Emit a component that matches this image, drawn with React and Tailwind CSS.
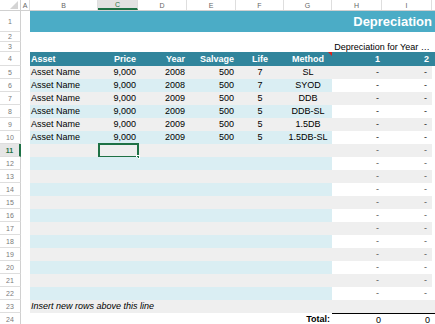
import React from 'react';

// column widths, in order A..I, then a filler
const W = {
  A: 'w-[9px]',
  B: 'w-[68px]',
  C: 'w-[40px]',
  D: 'w-[49px]',
  E: 'w-[49px]',
  F: 'w-[48px]',
  G: 'w-[48px]',
  H: 'w-[50px]',
  I: 'w-[50px]',
};
const LETTERS = ['A', 'B', 'C', 'D', 'E', 'F', 'G', 'H', 'I'];

const assets = [
  { year: 2008, life: 7, method: 'SL' },
  { year: 2008, life: 7, method: 'SYOD' },
  { year: 2009, life: 5, method: 'DDB' },
  { year: 2009, life: 5, method: 'DDB-SL' },
  { year: 2009, life: 5, method: '1.5DB' },
  { year: 2009, life: 5, method: '1.5DB-SL' },
];

function Gutter({ n, active }) {
  return (
    <div
      className={`w-[21px] shrink-0 flex items-center justify-center text-[7px] border-b border-[#dedede] ${
        active
          ? 'bg-[#e6e6e6] text-[#1e7145] font-bold border-r-2 border-r-[#1e7145]'
          : 'text-[#7a7a7a] border-r border-r-[#d0d0d0]'
      }`}
    >
      {n}
    </div>
  );
}

function Row({ n, h, active, children }) {
  return (
    <div className={`flex ${h}`}>
      <Gutter n={n} active={active} />
      {children}
    </div>
  );
}

function Cell({ col, className = '', children }) {
  return (
    <div className={`${W[col]} shrink-0 flex items-center overflow-visible whitespace-nowrap ${className}`}>
      {children}
    </div>
  );
}

function DataRow({ n, asset }) {
  const gray = n % 2 === 1;
  const band = gray ? 'bg-[#efefef]' : 'bg-[#daeef3]';
  const right = gray ? 'bg-[#efefef]' : 'bg-white';
  const dim = n > 10 ? 'text-[#555]' : 'text-[#222]';
  return (
    <Row n={n} h="h-[13px]" active={n === 11}>
      <Cell col="A" />
      <Cell col="B" className={`${band} pl-px`}>{asset && 'Asset Name'}</Cell>
      <Cell col="C" className={`${band} justify-end pr-[2px] relative`}>
        {asset && '9,000'}
        {n === 11 && (
          <div className="absolute left-0 -top-px w-[41px] h-[15px] border-2 border-[#1e7145]">
            <div className="absolute -right-[3px] -bottom-[3px] w-[4px] h-[4px] bg-[#1e7145] border border-white" />
          </div>
        )}
      </Cell>
      <Cell col="D" className={`${band} justify-end pr-[2px]`}>{asset && asset.year}</Cell>
      <Cell col="E" className={`${band} justify-end pr-[2px]`}>{asset && '500'}</Cell>
      <Cell col="F" className={`${band} justify-center`}>{asset && asset.life}</Cell>
      <Cell col="G" className={`${band} justify-center`}>{asset && asset.method}</Cell>
      <Cell col="H" className={`${right} justify-end pr-[3px] ${dim}`}>-</Cell>
      <Cell col="I" className={`${right} justify-end pr-[5px] ${dim}`}>-</Cell>
      <div className="flex-1" />
    </Row>
  );
}

export default function App() {
  const rows = [];
  for (let n = 5; n <= 22; n++) {
    rows.push(<DataRow key={n} n={n} asset={assets[n - 5]} />);
  }

  return (
    <div className="w-[435px] h-[324px] overflow-hidden bg-white text-[9px] text-black font-['Liberation_Sans',Arial,sans-serif] leading-none">
      {/* column letters */}
      <div className="flex h-[11px] border-b border-[#d0d0d0] text-[7px] text-[#666]">
        <div className="w-[21px] shrink-0 relative border-r border-[#d0d0d0]">
          <svg className="absolute right-[2px] bottom-[1px]" width="8" height="8" viewBox="0 0 8 8">
            <polygon points="8,0 8,8 0,8" fill="#d4d4d4" />
          </svg>
        </div>
        {LETTERS.map((l) => (
          <div
            key={l}
            className={`${W[l]} shrink-0 flex items-center justify-center border-r border-[#dedede] ${
              l === 'C' ? 'bg-[#e2e2e2] border-b-2 border-b-[#1e7145] text-[#1e7145]' : ''
            }`}
          >
            {l}
          </div>
        ))}
        <div className="flex-1" />
      </div>

      {/* row 1: title band */}
      <Row n={1} h="h-[21px]">
        <Cell col="A" />
        <div className="flex-1 bg-[#4bacc6] flex items-center justify-end pr-[3px] text-white font-bold text-[13px]">
          Depreciation
        </div>
      </Row>

      <Row n={2} h="h-[10px]">
        <div className="flex-1" />
      </Row>

      <Row n={3} h="h-[10px]">
        <div className="w-[311px] shrink-0" />
        <div className="w-[100px] shrink-0 flex items-center justify-center whitespace-nowrap">
          Depreciation for Year …
        </div>
      </Row>

      {/* row 4: table header */}
      <Row n={4} h="h-[14px]">
        <Cell col="A" />
        <div className="flex flex-1 bg-[#31859c] text-white font-bold">
          <Cell col="B" className="pl-px">Asset</Cell>
          <Cell col="C" className="justify-end pr-[2px]">Price</Cell>
          <Cell col="D" className="justify-end pr-[2px]">Year</Cell>
          <Cell col="E" className="justify-end pr-[2px]">Salvage</Cell>
          <Cell col="F" className="justify-center">Life</Cell>
          <Cell col="G" className="justify-center relative">
            Method
            <svg className="absolute right-0 top-0" width="4" height="4" viewBox="0 0 4 4">
              <polygon points="0,0 4,0 4,4" fill="#e0201b" />
            </svg>
          </Cell>
          <Cell col="H" className="justify-end pr-[2px]">1</Cell>
          <Cell col="I" className="justify-end pr-[3px]">2</Cell>
        </div>
      </Row>

      {rows}

      <Row n={23} h="h-[13px]">
        <Cell col="A" />
        <div className="flex-1 bg-[#efefef] flex items-center pl-px italic">Insert new rows above this line</div>
      </Row>

      <Row n={24} h="h-[13px]">
        <div className="w-[263px] shrink-0" />
        <Cell col="G" className="justify-end pr-[2px] font-bold">Total:</Cell>
        <Cell col="H" className="justify-end pr-[1px] border-t border-black">0</Cell>
        <Cell col="I" className="justify-end pr-[2px] border-t border-black">0</Cell>
        <div className="flex-1 border-t border-black" />
      </Row>
    </div>
  );
}
